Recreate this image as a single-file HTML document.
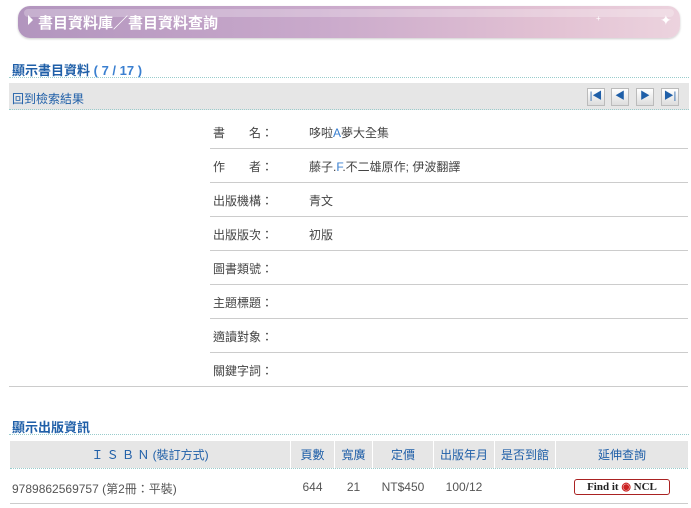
<!DOCTYPE html>
<html><head><meta charset="utf-8"><style>
*{margin:0;padding:0;box-sizing:border-box}
body{width:691px;height:508px;background:#fff;position:relative;overflow:hidden;font-family:"Liberation Sans","Noto Sans CJK TC",sans-serif;font-size:12px;color:#555}
.a{position:absolute;white-space:nowrap}
.banner{left:18px;top:6px;width:662px;height:32px;border-radius:12px;background:linear-gradient(90deg,#b295be 0%,#c9a9cb 45%,#e2c1d3 80%,#ecd3de 100%);box-shadow:0 1px 2px #ccc}
.banner:before{content:"";position:absolute;left:6px;right:6px;top:3px;height:8px;border-radius:6px;background:rgba(255,255,255,.25)}
.bt{left:38px;top:12px;color:#fff;font-size:15px;font-weight:bold;letter-spacing:0}
.h{color:#1f5fa8;font-weight:bold;font-size:13px}
.dot{height:1px;border-top:1px dotted #9cc}
.gl{height:1px;background:#ccc}
.lb{left:213px;color:#444;font-size:12px}
.vl{left:309px;color:#444;font-size:12px}
.btn{top:88px;width:18px;height:18px;background:linear-gradient(#fff,#ddd);border:1px solid #bbb;color:#1f5fa8;font-size:10px;text-align:center;line-height:16px}
.th{top:441px;height:27px;background:#e6e6e6;color:#1f5fa8;font-size:12px;text-align:center;line-height:29px}
.td{top:480px;text-align:center;color:#555;font-size:12px}
</style></head><body>
<div class="a banner"></div>
<div class="a" style="left:28px;top:15px;width:0;height:0;border-left:5px solid #fff;border-top:5px solid transparent;border-bottom:5px solid transparent"></div>
<div class="a bt">書目資料庫／書目資料查詢</div>
<div class="a" style="left:660px;top:12px;color:#fff;font-size:14px">✦</div>
<div class="a" style="left:596px;top:14px;color:#fff;font-size:8px">+</div>

<div class="a h" style="left:12px;top:60px">顯示書目資料 <span style="color:#3a7fd0">( 7 / 17 )</span></div>
<div class="a dot" style="left:9px;top:77px;width:680px"></div>
<div class="a" style="left:9px;top:83px;width:680px;height:27px;background:#e6e6e6;border-bottom:1px dotted #9cc"></div>
<div class="a" style="left:12px;top:90px;color:#1f5fa8;font-size:12px">回到檢索結果</div>
<div class="a btn" style="left:587px">|◀</div>
<div class="a btn" style="left:611px">◀</div>
<div class="a btn" style="left:636px">▶</div>
<div class="a btn" style="left:661px">▶|</div>

<div class="a lb" style="top:124px">書　　名：</div><div class="a vl" style="top:124px">哆啦<span style="color:#3a7fd0">A</span>夢大全集</div>
<div class="a gl" style="left:210px;top:148px;width:478px"></div>
<div class="a lb" style="top:158px">作　　者：</div><div class="a vl" style="top:158px">藤子.<span style="color:#3a7fd0">F</span>.不二雄原作; 伊波翻譯</div>
<div class="a gl" style="left:210px;top:182px;width:478px"></div>
<div class="a lb" style="top:192px">出版機構：</div><div class="a vl" style="top:192px">青文</div>
<div class="a gl" style="left:210px;top:216px;width:478px"></div>
<div class="a lb" style="top:226px">出版版次：</div><div class="a vl" style="top:226px">初版</div>
<div class="a gl" style="left:210px;top:250px;width:478px"></div>
<div class="a lb" style="top:260px">圖書類號：</div>
<div class="a gl" style="left:210px;top:284px;width:478px"></div>
<div class="a lb" style="top:294px">主題標題：</div>
<div class="a gl" style="left:210px;top:318px;width:478px"></div>
<div class="a lb" style="top:328px">適讀對象：</div>
<div class="a gl" style="left:210px;top:352px;width:478px"></div>
<div class="a lb" style="top:362px">關鍵字詞：</div>
<div class="a gl" style="left:9px;top:386px;width:679px"></div>

<div class="a h" style="left:12px;top:417px">顯示出版資訊</div>
<div class="a dot" style="left:9px;top:434px;width:680px"></div>
<div class="a th" style="left:10px;width:280px">Ｉ Ｓ Ｂ Ｎ (裝訂方式)</div>
<div class="a th" style="left:291px;width:43px">頁數</div>
<div class="a th" style="left:335px;width:37px">寬廣</div>
<div class="a th" style="left:373px;width:60px">定價</div>
<div class="a th" style="left:434px;width:60px">出版年月</div>
<div class="a th" style="left:495px;width:60px">是否到館</div>
<div class="a th" style="left:556px;width:132px">延伸查詢</div>
<div class="a dot" style="left:10px;top:468px;width:678px"></div>
<div class="a" style="left:12px;top:480px;color:#555">9789862569757 (第2冊：平裝)</div>
<div class="a td" style="left:291px;width:43px">644</div>
<div class="a td" style="left:335px;width:37px">21</div>
<div class="a td" style="left:373px;width:60px">NT$450</div>
<div class="a td" style="left:434px;width:60px">100/12</div>
<div class="a" style="left:574px;top:479px;width:96px;height:16px;border:1px solid #a22;border-radius:3px;font-family:'Liberation Serif',serif;font-size:11px;font-weight:bold;color:#222;text-align:center;line-height:14px">Find it <span style="color:#c22">◉</span> NCL</div>
<div class="a gl" style="left:10px;top:503px;width:678px"></div>
</body></html>
